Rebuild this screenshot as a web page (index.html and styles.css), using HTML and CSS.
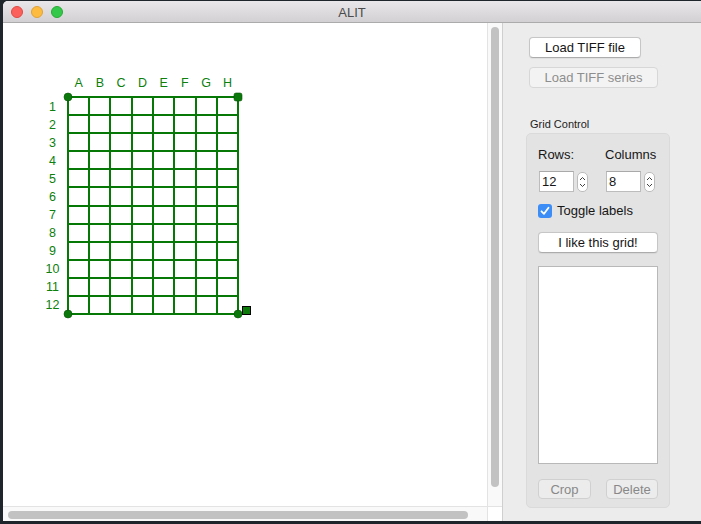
FILE: index.html
```html
<!DOCTYPE html>
<html>
<head>
<meta charset="utf-8">
<title>ALIT</title>
<link rel="stylesheet" href="styles.css">
</head>
<body>
<div class="window">
  <header class="titlebar">
    <div class="lights">
      <span class="light red"></span>
      <span class="light yellow"></span>
      <span class="light green"></span>
    </div>
    <div class="title">ALIT</div>
    <div></div>
  </header>
  <div class="main">
    <section class="scrollpane">
      <div class="canvas">
        <svg class="grid" width="484" height="483" viewBox="3 23 484 483">
          <g class="cols">
            <text x="78.6" y="86.5">A</text>
            <text x="99.9" y="86.5">B</text>
            <text x="121.1" y="86.5">C</text>
            <text x="142.4" y="86.5">D</text>
            <text x="163.6" y="86.5">E</text>
            <text x="184.9" y="86.5">F</text>
            <text x="206.1" y="86.5">G</text>
            <text x="227.4" y="86.5">H</text>
          </g>
          <g class="rows">
            <text x="52.5" y="110.5">1</text>
            <text x="52.5" y="128.5">2</text>
            <text x="52.5" y="146.5">3</text>
            <text x="52.5" y="164.5">4</text>
            <text x="52.5" y="182.5">5</text>
            <text x="52.5" y="200.5">6</text>
            <text x="52.5" y="219">7</text>
            <text x="52.5" y="237">8</text>
            <text x="52.5" y="255">9</text>
            <text x="52.5" y="273">10</text>
            <text x="52.5" y="291">11</text>
            <text x="52.5" y="309">12</text>
          </g>
          <path class="lines" d="M68 97V314M89 97V314M110 97V314M132 97V314M153 97V314M174 97V314M196 97V314M217 97V314M238 97V314M68 97H238M68 115H238M68 133H238M68 151H238M68 169H238M68 187H238M68 206H238M68 224H238M68 242H238M68 260H238M68 278H238M68 296H238M68 314H238"/>
          <circle class="dot" cx="68" cy="97" r="4"/>
          <circle class="dot" cx="68" cy="314" r="4"/>
          <circle class="dot" cx="238" cy="314" r="4"/>
          <rect class="dot" x="234" y="93" width="8" height="8" rx="2"/>
          <rect class="handle" x="242.5" y="306.5" width="8" height="8"/>
        </svg>
      </div>
      <div class="vscroll"><div class="vthumb"></div></div>
      <div class="hscroll"><div class="hthumb"></div></div>
      <div class="corner"></div>
    </section>
    <aside class="panel">
      <button class="btn btn-file">Load TIFF file</button>
      <button class="btn btn-series" disabled>Load TIFF series</button>
      <div class="group-title">Grid Control</div>
      <div class="group">
        <div class="fields">
          <div class="field">
            <div class="flabel">Rows:</div>
            <div class="spin">
              <div class="input">12</div>
              <svg class="stepper" width="11" height="20" viewBox="0 0 11 20"><rect x="0.5" y="0.5" width="10" height="19" rx="4.5"/><path d="M3 8L5.5 5.5L8 8M3 12L5.5 14.5L8 12"/></svg>
            </div>
          </div>
          <div class="field">
            <div class="flabel">Columns</div>
            <div class="spin">
              <div class="input">8</div>
              <svg class="stepper" width="11" height="20" viewBox="0 0 11 20"><rect x="0.5" y="0.5" width="10" height="19" rx="4.5"/><path d="M3 8L5.5 5.5L8 8M3 12L5.5 14.5L8 12"/></svg>
            </div>
          </div>
        </div>
        <label class="check">
          <svg class="box" width="14" height="14" viewBox="0 0 14 14"><rect x="0" y="0" width="14" height="14" rx="3"/><path d="M3.5 7.3L6 9.8L10.5 3.8"/></svg>
          <span>Toggle labels</span>
        </label>
        <button class="btn btn-like">I like this grid!</button>
        <div class="list"></div>
        <div class="actions">
          <button class="btn btn-crop" disabled>Crop</button>
          <button class="btn btn-delete" disabled>Delete</button>
        </div>
      </div>
    </aside>
  </div>
</div>
</body>
</html>
```

FILE: styles.css
```css
* { box-sizing: border-box; }
html, body { margin: 0; height: 100%; }
body {
  background: #1f262b;
  overflow: hidden;
  font-family: "Liberation Sans", Arial, sans-serif;
  font-size: 13px;
  color: #161616;
}
.window {
  margin: 1px 0 0 3px;
  width: 698px;
  height: 520px;
  display: flex;
  flex-direction: column;
  border-radius: 5px 0 0 0;
  overflow: hidden;
  background: #ececec;
}
.titlebar {
  flex: none;
  height: 22px;
  display: grid;
  grid-template-columns: 1fr auto 1fr;
  align-items: center;
  background: linear-gradient(#e9e7e9, #d2d0d2);
  border-bottom: 1px solid #ababab;
}
.lights { display: flex; gap: 8px; padding-left: 8px; padding-top: 1px; }
.light { width: 12px; height: 12px; border-radius: 50%; }
.red { background: #fc605b; border: 0.5px solid #de4a43; }
.yellow { background: #fdbc40; border: 0.5px solid #dea236; }
.green { background: #34c84a; border: 0.5px solid #27aa35; }
.title { font-size: 13px; color: #4b4b4b; padding-top: 1px; }

.main { flex: 1; display: flex; min-height: 0; }
.scrollpane {
  width: 499px;
  flex: none;
  display: grid;
  grid-template-columns: 484px 15px;
  grid-template-rows: 483px 15px;
}
.canvas { background: #fff; overflow: hidden; }
.grid { display: block; }
.grid text {
  font-family: "Liberation Sans", Arial, sans-serif;
  font-size: 12.5px;
  fill: #0c800c;
  text-anchor: middle;
}
.lines { fill: none; stroke: #067806; stroke-width: 2; stroke-linecap: square; }
.dot { fill: #0a780a; stroke: #055205; stroke-width: 0.6; }
.handle { fill: #0b7a0b; stroke: #000; stroke-width: 1; }

.vscroll {
  background: #f9f9f9;
  border-left: 1px solid #e3e3e3;
  padding: 4px 0 0 3px;
}
.vthumb { width: 8px; height: 460px; border-radius: 4px; background: #c2c2c2; }
.hscroll {
  background: #f9f9f9;
  border-top: 1px solid #e3e3e3;
  padding: 4px 0 0 5px;
}
.hthumb { width: 460px; height: 8px; border-radius: 4px; background: #c2c2c2; }
.corner { background: #fff; border-top: 1px solid #e3e3e3; border-left: 1px solid #e3e3e3; }

.panel {
  flex: 1;
  border-left: 1px solid #cfcfcf;
  padding: 14px 0 0 26px;
  display: flex;
  flex-direction: column;
  align-items: flex-start;
}
.btn {
  font-family: "Liberation Sans", Arial, sans-serif;
  font-size: 13px;
  height: 21px;
  padding: 0;
  background: #fff;
  color: #151515;
  border: 1px solid #c6c6c6;
  border-bottom-color: #acacac;
  border-radius: 4px;
  box-shadow: 0 0.5px 1px rgba(0, 0, 0, 0.06);
}
.btn:disabled {
  background: #f3f3f3;
  color: #8e8e8e;
  border-color: #d7d7d7;
  box-shadow: none;
}
.btn-file { width: 112px; }
.btn-series { width: 129px; margin-top: 9px; }
.group-title { font-size: 11px; line-height: 13px; margin: 30px 0 0 1px; color: #1c1c1c; }
.group {
  margin: 2px 0 0 -3px;
  width: 144px;
  height: 375px;
  background: #e3e3e3;
  border: 1px solid #dadada;
  border-radius: 5px;
  padding: 13px 0 0 11px;
  display: flex;
  flex-direction: column;
  align-items: flex-start;
}
.fields { display: grid; grid-template-columns: 67px auto; }
.flabel { line-height: 16px; }
.spin { display: flex; align-items: center; margin: 8px 0 0 1px; gap: 3px; }
.input {
  width: 35px;
  height: 21px;
  background: #fff;
  border: 1px solid #bcbcbc;
  border-top-color: #a9a9a9;
  padding: 2px 0 0 2px;
  line-height: 16px;
}
.stepper rect { fill: #fff; stroke: #bcbcbc; }
.stepper path { fill: none; stroke: #404040; stroke-width: 1; }
.check { display: flex; align-items: center; gap: 5px; margin-top: 11px; line-height: 16px; }
.box rect { fill: #3c8ef6; }
.box path { fill: none; stroke: #fff; stroke-width: 1.8; stroke-linecap: round; stroke-linejoin: round; }
.btn-like { width: 120px; margin-top: 13px; }
.list {
  width: 120px;
  height: 198px;
  margin-top: 13px;
  background: #fff;
  border: 1px solid #b8b8b8;
}
.actions { display: flex; gap: 15px; margin-top: 15px; }
.actions .btn { height: 20px; }
.actions .btn:disabled { background: #ececec; border-color: #d0d0d0; color: #888; }
.btn-crop { width: 53px; }
.btn-delete { width: 52px; }
```
